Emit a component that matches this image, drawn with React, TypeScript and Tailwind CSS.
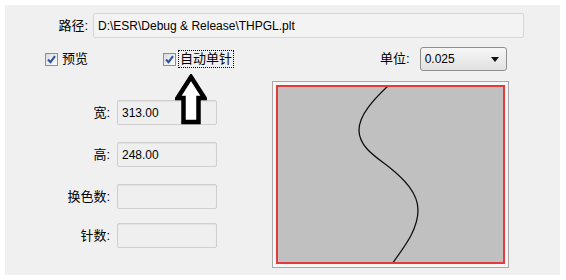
import React from "react";

const font = { fontFamily: '"Liberation Sans", "Noto Sans CJK SC", sans-serif' };

const CheckBox = () => <span className="flex h-[13px] w-[13px] items-center justify-center border border-[#8f8f8f] bg-gradient-to-br from-[#dcdcdc] to-[#fbfbfb]">
    <svg width="9" height="9" viewBox="0 0 9 9">
      <path d="M1 4.5 L3.5 7.2 L8 1.2" fill="none" stroke="#2c4f9e" strokeWidth="2" />
    </svg>
  </span>;

const Field = ({
  label,
  value
}: {
  label: string;
  value?: string;
}) => <div className="flex h-[25px] items-center">
    <span className="w-[105px] text-right text-[13px]">{label}</span>
    <div className="ml-[7px] flex h-[25px] w-[100px] items-center rounded-[2px] border border-[#cfcfcf] bg-[#efefef] pl-[4px] text-[12px] shadow-[inset_0_1px_1px_rgba(0,0,0,0.06)]">
      {value}
    </div>
  </div>;

export default function App() {
  return <div className="h-[280px] w-[566px] bg-white p-[5px] text-black" style={font}>
      <div className="relative h-[270px] w-[555px] bg-[#f0f0f0]">
        {/* path row */}
        <div className="flex items-center pt-[8px]">
          <span className="w-[83px] text-right text-[13px]">路径:</span>
          <div className="ml-[5px] flex h-[25px] w-[431px] items-center rounded-[2px] border border-[#d6d6d6] bg-[#f3f3f3] pl-[4px] text-[12px]">
            D:\ESR\Debug &amp; Release\THPGL.plt
          </div>
        </div>

        {/* options row */}
        <div className="mt-[9px] flex h-[24px] items-center">
          <div className="ml-[40px] flex items-center">
            <CheckBox />
            <span className="ml-[4px] text-[13px]">预览</span>
          </div>
          <div className="ml-[75px] flex items-center">
            <CheckBox />
            <span className="ml-[2px] border border-dotted border-black px-[1px] text-[13px] leading-[16px]">自动单针</span>
          </div>
          <span className="ml-[146px] text-[13px]">单位:</span>
          <div className="ml-[10px] flex h-[24px] w-[87px] items-center justify-between rounded-[3px] border border-[#8e8f8f] bg-gradient-to-b from-[#f6f6f6] to-[#e2e2e2] pl-[4px] pr-[7px] text-[12px]">
            <span>0.025</span>
            <svg width="8" height="5" viewBox="0 0 8 5">
              <path d="M0 0 H8 L4 5 Z" fill="#111" />
            </svg>
          </div>
        </div>

        {/* lower area */}
        <div className="mt-[10px] flex">
          <div className="flex w-[267px] flex-col pt-[19px]">
            <Field label="宽:" value="313.00" />
            <div className="mt-[17px]">
              <Field label="高:" value="248.00" />
            </div>
            <div className="mt-[17px]">
              <Field label="换色数:" />
            </div>
            <div className="mt-[14px]">
              <Field label="针数:" />
            </div>
          </div>
          <div className="h-[187px] w-[237px] border border-[#a9a9a9] bg-[#f6f6f6] p-[3px]">
            <div className="h-full w-full border-2 border-[#e23b3b] bg-[#c0c0c0]">
              <svg width="100%" height="100%" viewBox="0 0 225 175" preserveAspectRatio="none">
                <path d="M111 -2 C96 12 81 28 81 43 C81 60 98 70 111 80 C126 92 140 106 140 123 C140 143 126 160 114 177" fill="none" stroke="#111" strokeWidth="1.3" />
              </svg>
            </div>
          </div>
        </div>

        {/* annotation arrow */}
        <svg className="absolute left-[170px] top-[69px]" width="32" height="51" viewBox="0 0 32 51">
          <path d="M16 3 L29.5 24 L23.5 24 L23.5 48 L8.5 48 L8.5 24 L2.5 24 Z" fill="#fff" stroke="#000" strokeWidth="4.5" strokeLinejoin="miter" />
        </svg>
      </div>
    </div>;
}
